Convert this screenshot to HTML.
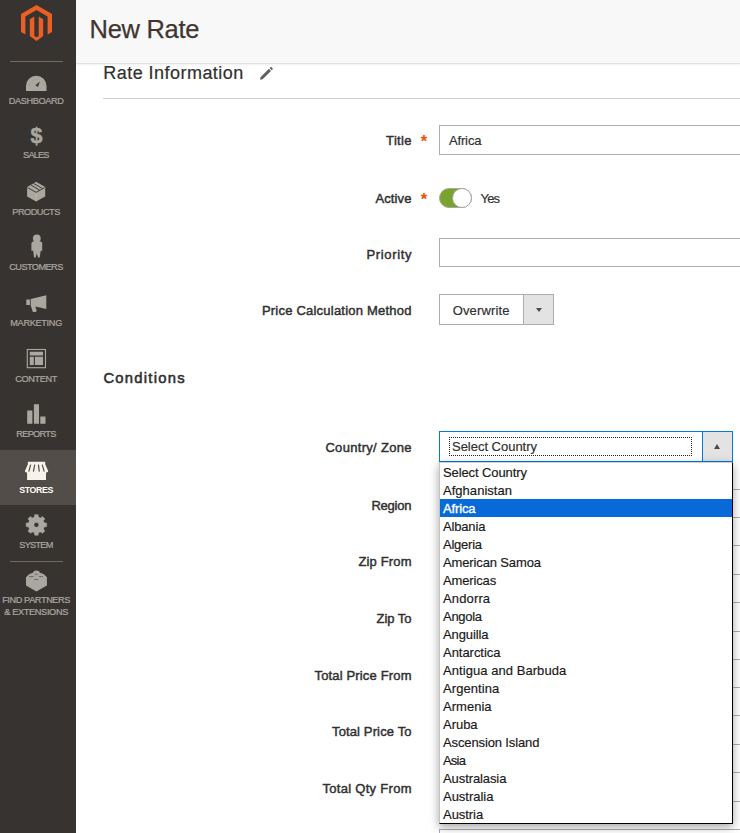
<!DOCTYPE html>
<html lang="en">
<head>
<meta charset="utf-8">
<title>New Rate</title>
<style>
html,body{margin:0;padding:0}
body{width:740px;height:833px;overflow:hidden;position:relative;background:#fff;font-family:"Liberation Sans",sans-serif;color:#303030}
.a{position:absolute;box-sizing:border-box}
.t{position:absolute;white-space:pre}
.sidebar{left:0;top:0;width:76px;height:833px;background:#373330}
.sep{left:10px;width:53px;height:1px;background:#736963}
.active{left:0;top:450px;width:76px;height:55px;background:#524d49}
.header{left:76px;top:0;width:664px;height:64px;background:#f8f8f8;border-bottom:1px solid #e3e3e3;box-shadow:0 1px 2px rgba(0,0,0,.06)}
.rule{left:103px;top:98px;width:637px;height:1px;background:#cfcfcf}
.input{left:439px;width:320px;background:#fff;border:1px solid #adadad}
.star{color:#eb5202}
.toggle{left:439px;top:188px;width:33px;height:20px;border-radius:10px;background:#79a22e;border:1px solid #aaa6a0}
.knob{left:452px;top:188px;width:20px;height:20px;border-radius:10px;background:#fff;border:1px solid #aaa6a0}
.sel1{left:439px;top:294px;width:115px;height:31px;background:#fff;border:1px solid #adadad}
.sel1 .arr{position:absolute;right:0;top:0;width:30px;height:29px;background:#e3e3e3;border-left:1px solid #adadad;box-sizing:border-box}
.tri{position:absolute;width:0;height:0;border-left:3.75px solid transparent;border-right:3.75px solid transparent}
.sel2{left:439px;top:431px;width:294px;height:31px;background:#fff;border:1px solid #007bdb}
.sel2 .arr{position:absolute;right:0;top:0;width:30px;height:29px;background:#e3e3e3;border-left:1px solid #007bdb;box-sizing:border-box}
.focus{left:449px;top:437px;width:243px;height:19px;border:1px dotted #222}
.dd{left:439px;top:462px;width:294px;height:362px;background:#fff;border:1px solid #000;border-left-color:#c4c4c4;border-top-color:#d0d0d0;box-shadow:0 3px 9px rgba(0,0,0,.36)}
.hl{left:440px;top:499px;width:292px;height:18px;background:#0869d9}
.bg{left:733px;width:7px;height:1px;background:#adadad}
svg{position:absolute;overflow:visible}

</style>
</head>
<body>
<!-- hidden form fields behind dropdown (only right edges visible) -->
<div class="a input" style="top:489px;height:29px"></div>
<div class="a input" style="top:545px;height:30px"></div>
<div class="a input" style="top:602px;height:30px"></div>
<div class="a input" style="top:659px;height:29px"></div>
<div class="a input" style="top:715px;height:30px"></div>
<div class="a input" style="top:772px;height:30px"></div>
<div class="a input" style="top:829px;height:30px"></div>

<div class="a header"></div>
<div class="a sidebar"></div>
<div class="a sep" style="top:61px"></div>
<div class="a active"></div>
<div class="a sep" style="top:561px"></div>

<!-- logo -->
<svg style="left:21px;top:5px" width="31" height="36" viewBox="0 0 31 36"><path fill="#eb5f24" d="M15.5 0 L31 9 V27 L26.6 29.6 V11.6 L15.5 5.1 L4.4 11.6 V29.6 L0 27 V9 Z M13.3 11.6 V30.9 L15.5 32.2 L17.7 30.9 V11.6 L22.2 14.2 V30.9 L15.5 36 L8.8 30.9 V14.2 Z"/></svg>

<div class="a rule"></div>
<div class="a input" style="top:125px;height:30px"></div>
<div class="a input" style="top:238px;height:29px"></div>
<div class="a toggle"></div><div class="a knob"></div>
<div class="a sel1"><div class="arr"></div><div class="tri" style="left:95.6px;top:12.6px;border-top:4.8px solid #514943"></div></div>
<div class="a sel2"><div class="arr"></div><div class="tri" style="left:273.5px;top:12.2px;border-bottom:5.2px solid #514943"></div></div>
<div class="a focus"></div>
<div class="a dd"></div>
<div class="a hl"></div>
<div class="t star" style="left:420.7px;top:133.4px;font-size:16.5px;line-height:16.5px;font-weight:700">*</div>
<div class="t star" style="left:420.7px;top:190.9px;font-size:16.5px;line-height:16.5px;font-weight:700">*</div>
<div class="t" style="left:30.5px;top:125.9px;font-size:21.5px;line-height:21.5px;font-weight:700;color:#aaa6a0;-webkit-text-stroke:0.5px #aaa6a0">$</div>
<!-- sidebar icons -->
<svg style="left:0;top:0" width="76" height="833" viewBox="0 0 76 833">
<!-- dashboard -->
<path fill="#aaa6a0" d="M26 91 V86 A10.25 10.25 0 0 1 46.5 86 V91 Z"/>
<path fill="#373330" d="M39.8 81.4 L38 86.9 L35.4 85.3 Z"/>
<g fill="#8f8a86"><circle cx="29.4" cy="85.3" r=".45"/><circle cx="30.5" cy="82.2" r=".45"/><circle cx="32.4" cy="80.3" r=".45"/><circle cx="34.5" cy="79.3" r=".45"/><circle cx="37.5" cy="79.3" r=".45"/><circle cx="42.4" cy="82.2" r=".45"/><circle cx="43.5" cy="85.3" r=".45"/></g>
<!-- products -->
<path fill="#aaa6a0" d="M36.1 181.7 L45.2 186.9 V196.5 L36.1 201.5 L27.1 196.5 V186.9 Z"/>
<path fill="none" stroke="#373330" stroke-width=".9" d="M27.6 187.6 L36.1 192.4 L44.7 187.6 M30.7 184.8 L39.7 190.2 M33.4 183.3 L42.5 188.5"/>
<path fill="none" stroke="#c9b79a" stroke-width=".8" d="M36.1 192.8 V201"/>
<!-- customers -->
<circle fill="#aaa6a0" cx="36.8" cy="238.5" r="3.9"/>
<path fill="#aaa6a0" d="M31.4 243.6 Q31.4 241.6 33.4 241.6 H40.2 Q42.2 241.6 42.2 243.6 V250.8 H40.7 L39.7 257.6 H38 L36.8 253.6 L35.6 257.6 H34 L33.2 250.8 H31.4 Z"/>
<!-- marketing -->
<path fill="#aaa6a0" d="M26.3 299.6 H29.9 V305 H26.3 Z M30.7 299 L46.3 295.3 V309 L35.3 306.4 L36.8 311 L35.4 312 H32.9 L30.7 305.6 Z"/>
<!-- content -->
<rect x="27.3" y="349.5" width="18.2" height="18.2" fill="none" stroke="#aaa6a0" stroke-width="1.1"/>
<path fill="#aaa6a0" d="M29.8 351.7 H43 V355.4 H29.8 Z M29.8 356.8 H33.8 V365 H29.8 Z M34.9 356.8 H43 V365 H34.9 Z"/>
<!-- reports -->
<path fill="#aaa6a0" d="M27.2 410.4 H32.4 V423.7 H27.2 Z M33.9 404.3 H39 V423.7 H33.9 Z M40.3 416.4 H45.5 V423.7 H40.3 Z"/>
<!-- stores -->
<path fill="#f7f3eb" d="M27.9 461.7 H45.2 V464.2 L48.2 471 Q48.2 472.4 46.6 472.4 H46 V480 H27.1 V472.4 H26.5 Q24.9 472.4 24.9 471 L27.9 464.2 Z"/>
<path fill="none" stroke="#524d49" stroke-width="1.2" d="M30.7 464.6 L28.8 471.6 M34.7 464.6 L33.4 471.6 M38.4 464.6 L39.3 471.6 M42.2 464.6 L44.2 471.6"/>
<!-- system -->
<path fill="#aaa6a0" stroke="#aaa6a0" stroke-width=".5" stroke-linejoin="round" fill-rule="evenodd" d="M34.37 517.06 L34.68 514.64 L38.12 514.64 L38.43 517.06 L40.51 517.92 L42.44 516.43 L44.87 518.86 L43.38 520.79 L44.24 522.87 L46.66 523.18 L46.66 526.62 L44.24 526.93 L43.38 529.01 L44.87 530.94 L42.44 533.37 L40.51 531.88 L38.43 532.74 L38.12 535.16 L34.68 535.16 L34.37 532.74 L32.29 531.88 L30.36 533.37 L27.93 530.94 L29.42 529.01 L28.56 526.93 L26.14 526.62 L26.14 523.18 L28.56 522.87 L29.42 520.79 L27.93 518.86 L30.36 516.43 L32.29 517.92 Z M33.95 524.90 a2.45 2.45 0 1 0 4.9 0 a2.45 2.45 0 1 0 -4.9 0 Z"/>
<!-- find partners -->
<path fill="#aaa6a0" d="M33.6 571.6 Q36.4 569.4 39.3 571.6 L39.6 572.4 Q44.5 573.6 46.9 577.2 V585.6 L36.4 591.5 L26 585.6 V577.2 Q28.4 573.6 33.3 572.4 Z"/>
<path fill="none" stroke="#5b5551" stroke-width=".8" d="M29.2 576.6 H33.6 M39 576.6 H43 M34.4 579.5 H38 M34.7 574.2 H37.7"/>
</svg>
<!-- pencil -->
<svg style="left:258px;top:65px" width="18" height="18" viewBox="258 65 18 18"><path fill="#5f5f5f" d="M260 79.8 L260.5 77.2 L268.9 68.8 L271 70.9 L262.6 79.3 Z M269.6 68.1 L270.6 67.1 Q271 66.7 271.4 67.1 L272.7 68.4 Q273.1 68.8 272.7 69.2 L271.7 70.2 Z"/></svg>

<!-- text -->
<div class="t" style="left:89.60px;top:16.81px;font-size:25.5px;line-height:25.5px;color:#41362f;letter-spacing:-0.310px;-webkit-text-stroke:0.25px #41362f;">New Rate</div>
<div class="t" style="left:103.30px;top:63.76px;font-size:18px;line-height:18px;color:#303030;letter-spacing:0.461px;-webkit-text-stroke:0.2px #303030;">Rate Information</div>
<div class="t" style="left:103.40px;top:371.07px;font-size:14.8px;line-height:14.8px;color:#303030;letter-spacing:1.264px;-webkit-text-stroke:0.55px #303030;">Conditions</div>
<div class="t" style="left:386.10px;top:134.30px;font-size:13px;line-height:13px;color:#303030;letter-spacing:0.330px;-webkit-text-stroke:0.45px #303030;">Title</div>
<div class="t" style="left:375.40px;top:191.70px;font-size:13px;line-height:13px;color:#303030;letter-spacing:0.139px;-webkit-text-stroke:0.45px #303030;">Active</div>
<div class="t" style="left:366.50px;top:247.70px;font-size:13px;line-height:13px;color:#303030;letter-spacing:0.650px;-webkit-text-stroke:0.45px #303030;">Priority</div>
<div class="t" style="left:261.90px;top:303.70px;font-size:13px;line-height:13px;color:#303030;letter-spacing:0.220px;-webkit-text-stroke:0.45px #303030;">Price Calculation Method</div>
<div class="t" style="left:325.40px;top:441.20px;font-size:13px;line-height:13px;color:#303030;letter-spacing:0.310px;-webkit-text-stroke:0.45px #303030;">Country/ Zone</div>
<div class="t" style="left:371.40px;top:499.00px;font-size:13px;line-height:13px;color:#303030;letter-spacing:-0.221px;-webkit-text-stroke:0.45px #303030;">Region</div>
<div class="t" style="left:358.50px;top:555.30px;font-size:13px;line-height:13px;color:#303030;letter-spacing:0.143px;-webkit-text-stroke:0.45px #303030;">Zip From</div>
<div class="t" style="left:376.50px;top:612.00px;font-size:13px;line-height:13px;color:#303030;letter-spacing:-0.034px;-webkit-text-stroke:0.45px #303030;">Zip To</div>
<div class="t" style="left:314.50px;top:669.00px;font-size:13px;line-height:13px;color:#303030;letter-spacing:0.157px;-webkit-text-stroke:0.45px #303030;">Total Price From</div>
<div class="t" style="left:332.00px;top:725.00px;font-size:13px;line-height:13px;color:#303030;letter-spacing:0.131px;-webkit-text-stroke:0.45px #303030;">Total Price To</div>
<div class="t" style="left:322.50px;top:782.00px;font-size:13px;line-height:13px;color:#303030;letter-spacing:0.288px;-webkit-text-stroke:0.45px #303030;">Total Qty From</div>
<div class="t" style="left:448.90px;top:134.10px;font-size:13px;line-height:13px;color:#303030;letter-spacing:-0.127px;-webkit-text-stroke:0.18px #303030;">Africa</div>
<div class="t" style="left:480.60px;top:191.70px;font-size:13px;line-height:13px;color:#303030;letter-spacing:-0.859px;-webkit-text-stroke:0.18px #303030;">Yes</div>
<div class="t" style="left:452.70px;top:303.90px;font-size:13px;line-height:13px;color:#303030;letter-spacing:0.147px;-webkit-text-stroke:0.18px #303030;">Overwrite</div>
<div class="t" style="left:452.00px;top:439.70px;font-size:13px;line-height:13px;color:#303030;letter-spacing:-0.020px;-webkit-text-stroke:0.18px #303030;">Select Country</div>
<div class="t" style="left:443.00px;top:466.00px;font-size:13px;line-height:13px;color:#1a1a1a;letter-spacing:-0.105px;-webkit-text-stroke:0.18px #1a1a1a;">Select Country</div>
<div class="t" style="left:443.00px;top:484.00px;font-size:13px;line-height:13px;color:#1a1a1a;letter-spacing:0.033px;-webkit-text-stroke:0.18px #1a1a1a;">Afghanistan</div>
<div class="t" style="left:443.00px;top:502.00px;font-size:13px;line-height:13px;color:#ffffff;letter-spacing:-0.127px;-webkit-text-stroke:0.35px #fff;">Africa</div>
<div class="t" style="left:443.00px;top:520.00px;font-size:13px;line-height:13px;color:#1a1a1a;letter-spacing:-0.163px;-webkit-text-stroke:0.18px #1a1a1a;">Albania</div>
<div class="t" style="left:443.00px;top:538.00px;font-size:13px;line-height:13px;color:#1a1a1a;letter-spacing:-0.228px;-webkit-text-stroke:0.18px #1a1a1a;">Algeria</div>
<div class="t" style="left:443.00px;top:556.00px;font-size:13px;line-height:13px;color:#1a1a1a;letter-spacing:-0.132px;-webkit-text-stroke:0.18px #1a1a1a;">American Samoa</div>
<div class="t" style="left:443.00px;top:574.00px;font-size:13px;line-height:13px;color:#1a1a1a;letter-spacing:-0.141px;-webkit-text-stroke:0.18px #1a1a1a;">Americas</div>
<div class="t" style="left:443.00px;top:592.00px;font-size:13px;line-height:13px;color:#1a1a1a;letter-spacing:0.142px;-webkit-text-stroke:0.18px #1a1a1a;">Andorra</div>
<div class="t" style="left:443.00px;top:610.00px;font-size:13px;line-height:13px;color:#1a1a1a;letter-spacing:-0.277px;-webkit-text-stroke:0.18px #1a1a1a;">Angola</div>
<div class="t" style="left:443.00px;top:628.00px;font-size:13px;line-height:13px;color:#1a1a1a;letter-spacing:-0.095px;-webkit-text-stroke:0.18px #1a1a1a;">Anguilla</div>
<div class="t" style="left:443.00px;top:646.00px;font-size:13px;line-height:13px;color:#1a1a1a;letter-spacing:-0.035px;-webkit-text-stroke:0.18px #1a1a1a;">Antarctica</div>
<div class="t" style="left:443.00px;top:664.00px;font-size:13px;line-height:13px;color:#1a1a1a;letter-spacing:0.058px;-webkit-text-stroke:0.18px #1a1a1a;">Antigua and Barbuda</div>
<div class="t" style="left:443.00px;top:682.00px;font-size:13px;line-height:13px;color:#1a1a1a;letter-spacing:0.068px;-webkit-text-stroke:0.18px #1a1a1a;">Argentina</div>
<div class="t" style="left:443.00px;top:700.00px;font-size:13px;line-height:13px;color:#1a1a1a;letter-spacing:0.030px;-webkit-text-stroke:0.18px #1a1a1a;">Armenia</div>
<div class="t" style="left:443.00px;top:718.00px;font-size:13px;line-height:13px;color:#1a1a1a;letter-spacing:-0.026px;-webkit-text-stroke:0.18px #1a1a1a;">Aruba</div>
<div class="t" style="left:443.00px;top:736.00px;font-size:13px;line-height:13px;color:#1a1a1a;letter-spacing:-0.125px;-webkit-text-stroke:0.18px #1a1a1a;">Ascension Island</div>
<div class="t" style="left:443.00px;top:754.00px;font-size:13px;line-height:13px;color:#1a1a1a;letter-spacing:-0.799px;-webkit-text-stroke:0.18px #1a1a1a;">Asia</div>
<div class="t" style="left:443.00px;top:772.00px;font-size:13px;line-height:13px;color:#1a1a1a;letter-spacing:-0.091px;-webkit-text-stroke:0.18px #1a1a1a;">Australasia</div>
<div class="t" style="left:443.00px;top:790.00px;font-size:13px;line-height:13px;color:#1a1a1a;letter-spacing:-0.022px;-webkit-text-stroke:0.18px #1a1a1a;">Australia</div>
<div class="t" style="left:443.00px;top:808.00px;font-size:13px;line-height:13px;color:#1a1a1a;letter-spacing:-0.045px;-webkit-text-stroke:0.18px #1a1a1a;">Austria</div>
<div class="t" style="left:8.70px;top:96.61px;font-size:9.2px;line-height:9.2px;color:#aaa6a0;letter-spacing:-0.375px;-webkit-text-stroke:0.22px #aaa6a0;">DASHBOARD</div>
<div class="t" style="left:23.10px;top:151.31px;font-size:9.2px;line-height:9.2px;color:#aaa6a0;letter-spacing:-0.806px;-webkit-text-stroke:0.22px #aaa6a0;">SALES</div>
<div class="t" style="left:12.30px;top:207.61px;font-size:9.2px;line-height:9.2px;color:#aaa6a0;letter-spacing:-0.509px;-webkit-text-stroke:0.22px #aaa6a0;">PRODUCTS</div>
<div class="t" style="left:9.30px;top:262.61px;font-size:9.2px;line-height:9.2px;color:#aaa6a0;letter-spacing:-0.568px;-webkit-text-stroke:0.22px #aaa6a0;">CUSTOMERS</div>
<div class="t" style="left:10.30px;top:318.61px;font-size:9.2px;line-height:9.2px;color:#aaa6a0;letter-spacing:-0.328px;-webkit-text-stroke:0.22px #aaa6a0;">MARKETING</div>
<div class="t" style="left:15.30px;top:374.61px;font-size:9.2px;line-height:9.2px;color:#aaa6a0;letter-spacing:-0.401px;-webkit-text-stroke:0.22px #aaa6a0;">CONTENT</div>
<div class="t" style="left:16.30px;top:429.61px;font-size:9.2px;line-height:9.2px;color:#aaa6a0;letter-spacing:-0.708px;-webkit-text-stroke:0.22px #aaa6a0;">REPORTS</div>
<div class="t" style="left:19.30px;top:485.95px;font-size:8.8px;line-height:8.8px;color:#ffffff;font-weight:700;letter-spacing:-0.403px;">STORES</div>
<div class="t" style="left:19.30px;top:540.61px;font-size:9.2px;line-height:9.2px;color:#aaa6a0;letter-spacing:-0.756px;-webkit-text-stroke:0.22px #aaa6a0;">SYSTEM</div>
<div class="t" style="left:2.15px;top:596.41px;font-size:9.2px;line-height:9.2px;color:#aaa6a0;letter-spacing:-0.406px;-webkit-text-stroke:0.22px #aaa6a0;">FIND PARTNERS</div>
<div class="t" style="left:4.30px;top:608.21px;font-size:9.2px;line-height:9.2px;color:#aaa6a0;letter-spacing:-0.355px;-webkit-text-stroke:0.22px #aaa6a0;">&amp; EXTENSIONS</div>
</body>
</html>
